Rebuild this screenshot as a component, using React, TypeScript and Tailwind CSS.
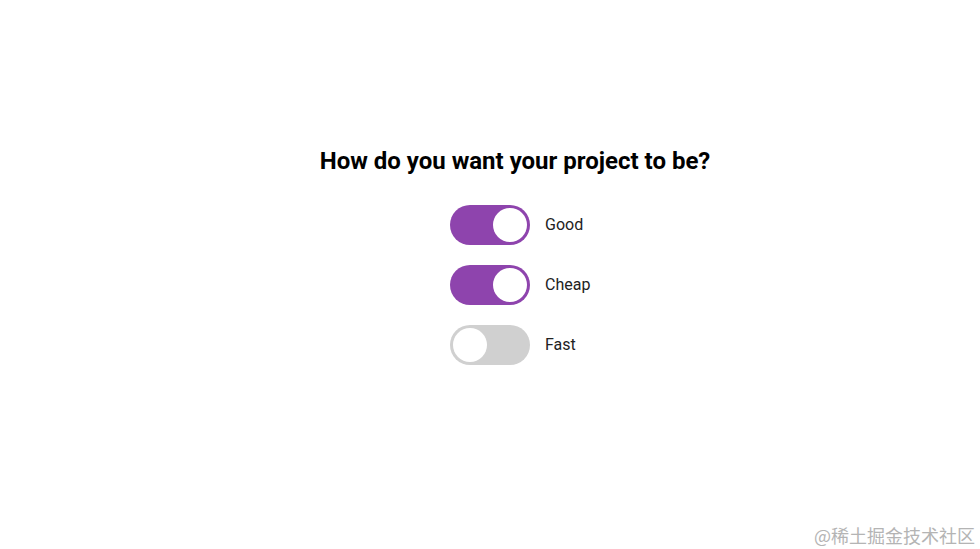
import { useState } from 'react';

const options = [
  { id: 'good', label: 'Good', on: true },
  { id: 'cheap', label: 'Cheap', on: true },
  { id: 'fast', label: 'Fast', on: false },
];

function Toggle({ checked, onChange }: { checked: boolean; onChange: () => void }) {
  return (
    <button
      type="button"
      onClick={onChange}
      className={`relative h-10 w-20 shrink-0 rounded-full transition-colors ${
        checked ? 'bg-[#8e44ad]' : 'bg-[#d0d0d0]'
      }`}
    >
      <span
        className={`absolute top-[3px] h-[34px] w-[34px] rounded-full bg-white transition-all ${
          checked ? 'left-[43px]' : 'left-[3px]'
        }`}
      />
    </button>
  );
}

export default function App() {
  const [state, setState] = useState(options.map((o) => o.on));

  return (
    <div className="relative h-[549px] w-full bg-white font-['Roboto',sans-serif]">
      <div className="flex flex-col items-center pl-[50px] pt-[147px]">
        <h1 className="text-2xl leading-7 font-bold text-black">How do you want your project to be?</h1>
        <div className="mt-[30px] flex w-[130px] flex-col gap-5">
          {options.map((o, i) => (
            <label key={o.id} className="flex items-center gap-[15px]">
              <Toggle
                checked={state[i]}
                onChange={() => setState((s) => s.map((v, j) => (j === i ? !v : v)))}
              />
              <span className="text-base text-[#222]">{o.label}</span>
            </label>
          ))}
        </div>
      </div>
      <div className="absolute right-[5px] bottom-[2px] font-['Noto_Sans_CJK_SC',sans-serif] text-[18px] leading-6 text-[#b4b4b4]">
        @稀土掘金技术社区
      </div>
    </div>
  );
}
